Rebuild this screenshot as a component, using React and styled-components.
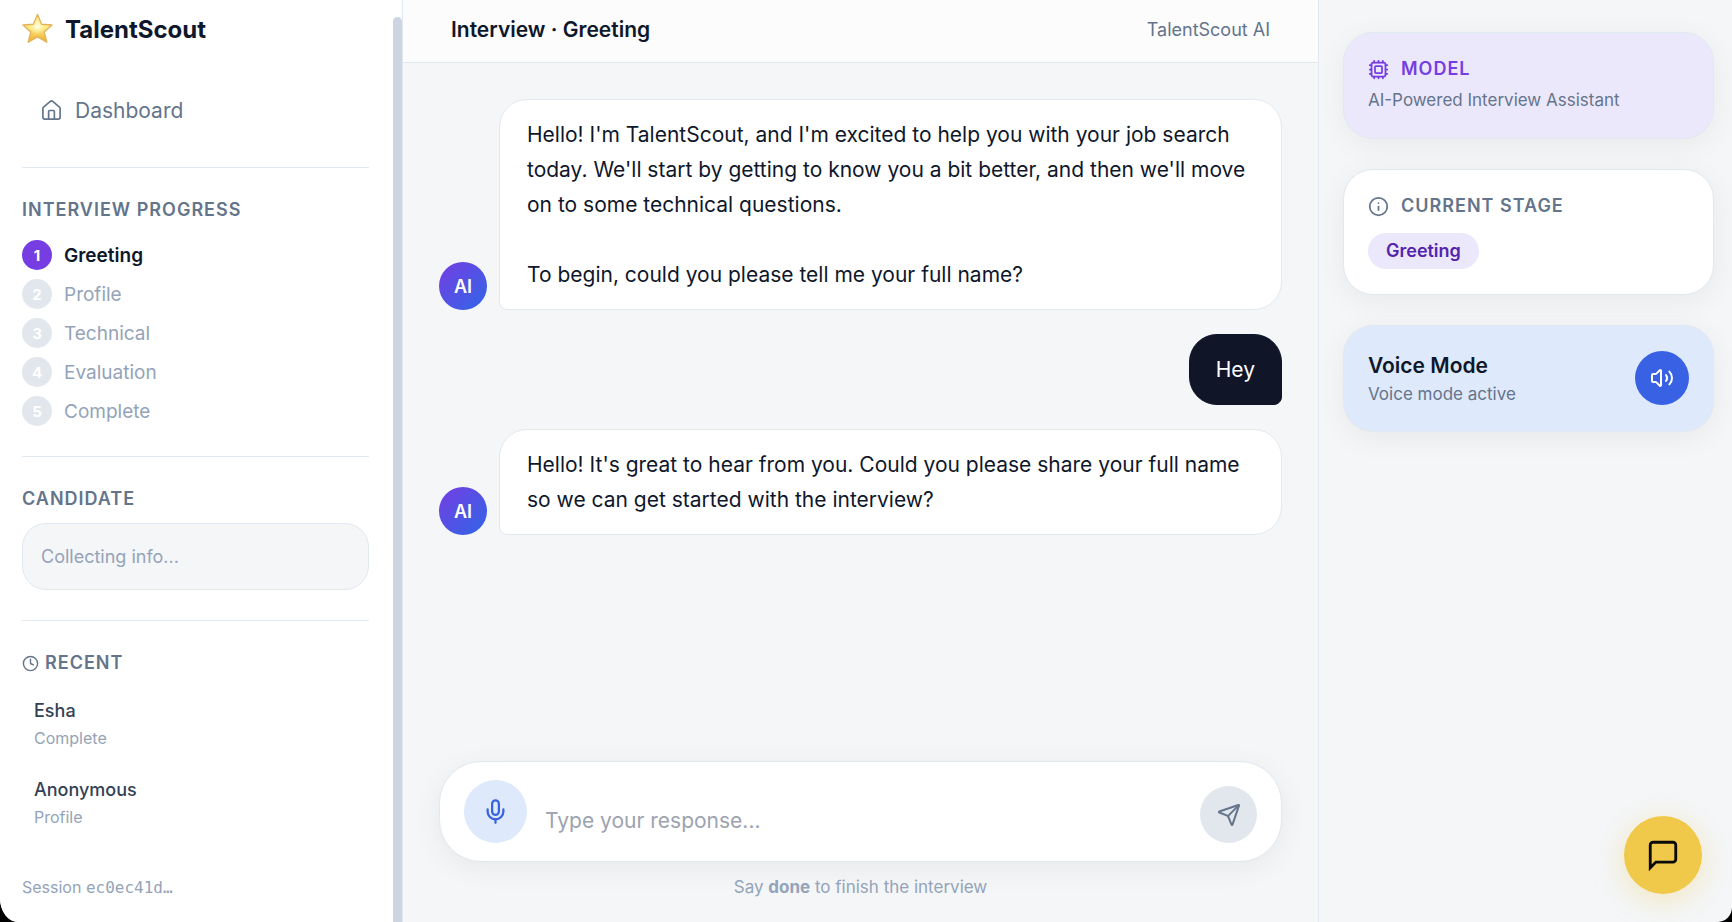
import React from "react";
import styled, { createGlobalStyle, css } from "styled-components";
import { House, Clock, Cpu, Info, Mic, Send, Volume2 } from "lucide-react";

const color = {
  ink: "#0f172a",
  slate: "#334155",
  muted: "#64748b",
  faint: "#94a3b8",
  line: "#e2e8f0",
  canvas: "#f4f6f8",
  violet: "#763de3",
  violetDark: "#5423ae",
  violetSoft: "#ece8fb",
  blue: "#3862e3",
  blueSoft: "#dee9fb",
  gold: "#f0c84a",
};

const GlobalStyle = createGlobalStyle`
  * { box-sizing: border-box; }
  body {
    margin: 0;
    background: #000;
    color: ${color.ink};
    font-family: Inter, "Liberation Sans", sans-serif;
    font-size: 18px;
  }
  button, textarea { font: inherit; color: inherit; border: 0; padding: 0; background: none; }
  button { cursor: pointer; }
  h1, h2, p, ol, ul { margin: 0; padding: 0; }
  ol, ul { list-style: none; }
`;

const Shell = styled.div`
  display: flex;
  min-height: 100vh;
  overflow: hidden;
  background: ${color.canvas};
  border-radius: 0 0 14px 18px / 0 0 15px 24px;
`;

const Sidebar = styled.aside`
  display: flex;
  flex: 0 0 403px;
  background: #fff;
  border-right: 1px solid ${color.line};
`;

const SidebarContent = styled.div`
  display: flex;
  flex-direction: column;
  flex: 1;
  padding: 10px 24px 22px 22px;
`;

const ScrollTrack = styled.div`
  display: flex;
  width: 9px;
  padding-top: 17px;
`;

const ScrollThumb = styled.div`
  flex: 1;
  background: #ccd5e1;
  border-radius: 5px 5px 0 0;
`;

const Brand = styled.div`
  display: flex;
  align-items: center;
  gap: 11px;
  height: 38px;
  font-size: 24px;
  font-weight: 700;
`;

const NavLink = styled.a`
  display: flex;
  align-items: center;
  gap: 12px;
  height: 48px;
  margin: 38px 0 33px;
  padding: 0 18px;
  color: ${color.muted};
  font-size: 21px;
  text-decoration: none;
`;

const Section = styled.section`
  padding: 29px 0 30px;
  border-top: 1px solid ${color.line};
`;

const Heading = styled.h2`
  display: flex;
  align-items: center;
  gap: ${(p) => p.$gap || 6}px;
  color: ${(p) => p.$color || color.muted};
  font-size: 18px;
  font-weight: 600;
  line-height: ${(p) => p.$line || 26}px;
  letter-spacing: 1px;
  text-transform: uppercase;
`;

const Steps = styled.ol`
  display: flex;
  flex-direction: column;
  gap: 9px;
  margin-top: 17px;
`;

const Step = styled.li`
  display: flex;
  align-items: center;
  gap: 12px;
  height: 30px;
  color: ${(p) => (p.$active ? color.ink : color.faint)};
  font-size: 19px;
  font-weight: ${(p) => (p.$active ? 600 : 400)};
`;

const StepNumber = styled.span`
  display: grid;
  place-items: center;
  width: 30px;
  height: 30px;
  border-radius: 50%;
  background: ${(p) => (p.$active ? color.violet : "#e2e7ee")};
  color: #fff;
  font-size: 15px;
  font-weight: 700;
`;

const CandidateBox = styled.p`
  margin-top: 11px;
  padding: 20px 18px;
  border: 1px solid ${color.line};
  border-radius: 24px;
  background: ${color.canvas};
  color: ${color.faint};
  line-height: 25px;
`;

const RecentList = styled.ul`
  display: flex;
  flex-direction: column;
  gap: 6px;
  margin-top: 11px;
`;

const RecentItem = styled.button`
  display: flex;
  flex-direction: column;
  gap: 2px;
  width: 100%;
  padding: 11px 12px 10px;
  text-align: left;
`;

const RecentName = styled.span`
  color: ${color.slate};
  font-weight: 500;
  line-height: 26px;
`;

const Caption = styled.span`
  display: block;
  color: ${(p) => p.$color || color.faint};
  font-size: ${(p) => (p.$large ? 17 : 16)}px;
  line-height: 24px;
`;

const Session = styled(Caption)`
  margin-top: auto;

  code { font-family: "DejaVu Sans Mono", monospace; font-size: 16px; }
`;

const Main = styled.main`
  display: flex;
  flex: 1;
  flex-direction: column;
  min-width: 0;
`;

const TopBar = styled.header`
  display: flex;
  align-items: center;
  justify-content: space-between;
  height: 63px;
  padding: 0 48px 4px;
  background: #fcfcfc;
  border-bottom: 1px solid ${color.line};
`;

const Title = styled.h1`
  font-size: 21px;
  font-weight: 600;
`;

const TopLabel = styled.span`
  color: ${color.muted};
`;

const Thread = styled.div`
  display: flex;
  flex: 1;
  flex-direction: column;
  gap: 24px;
  padding: 36px;
`;

const Message = styled.div`
  display: flex;
  align-items: flex-end;
  gap: 12px;
  justify-content: ${(p) => (p.$own ? "flex-end" : "flex-start")};
`;

const Avatar = styled.span`
  display: grid;
  flex: none;
  place-items: center;
  width: 48px;
  height: 48px;
  border-radius: 50%;
  background: linear-gradient(135deg, ${color.violet}, #2f66e6);
  color: #fff;
  font-weight: 600;
`;

const Bubble = styled.p`
  padding: 17px 27px;
  border: 1px solid ${color.line};
  border-radius: 28px 28px 28px 8px;
  background: #fff;
  font-size: 21px;
  line-height: 35px;
  white-space: pre-wrap;

  ${(p) =>
    p.$own &&
    css`
      padding: 17px 26px;
      border-color: #101628;
      border-radius: 28px 28px 8px 28px;
      background: #101628;
      color: #fff;
    `}
`;

const Footer = styled.footer`
  padding: 0 36px 23px;
`;

const Composer = styled.form`
  display: flex;
  align-items: flex-end;
  gap: 18px;
  padding: 18px 24px;
  border: 1px solid ${color.line};
  border-radius: 42px;
  background: #fff;
  box-shadow: 0 6px 30px rgba(0, 0, 0, 0.06);
`;

const RoundButton = styled.button`
  display: grid;
  flex: none;
  place-items: center;
  width: ${(p) => p.$size}px;
  height: ${(p) => p.$size}px;
  border-radius: 50%;
  background: ${(p) => p.$bg};
  color: ${(p) => p.$fg};
`;

const MessageInput = styled.textarea`
  flex: 1;
  min-width: 0;
  height: 37px;
  padding-bottom: 7px;
  font-size: 21px;
  line-height: 30px;
  resize: none;
  outline: none;
  overflow: hidden;

  &::placeholder { color: #9ca3af; opacity: 1; }
`;

const Hint = styled(Caption)`
  margin-top: 13px;
  text-align: center;
`;

const Panel = styled.aside`
  display: flex;
  flex: 0 0 414px;
  flex-direction: column;
  gap: 30px;
  padding: 32px 18px 32px 24px;
  border-left: 1px solid ${color.line};
`;

const Card = styled.section`
  padding: 24px 24px 25px;
  border: 1px solid ${color.line};
  border-radius: 30px;
  background: ${(p) => p.$bg || "#fff"};
  box-shadow: 0 6px 30px rgba(0, 0, 0, 0.06);
`;

const ModelText = styled(Caption)`
  margin-top: 7px;
  padding-bottom: 1px;
`;

const Pill = styled.span`
  display: inline-block;
  margin-top: 15px;
  padding: 0 18px;
  border-radius: 18px;
  background: ${color.violetSoft};
  color: ${color.violetDark};
  font-weight: 600;
  line-height: 36px;
  vertical-align: top;
`;

const VoiceCard = styled(Card)`
  display: flex;
  align-items: center;
  justify-content: space-between;
`;

const VoiceTitle = styled.h2`
  font-size: 21px;
  font-weight: 600;
  line-height: 32px;
`;

const ChatButton = styled(RoundButton)`
  position: fixed;
  right: 30px;
  bottom: 28px;
  box-shadow: 0 6px 30px rgba(240, 200, 74, 0.35);
`;

const StarLogo = () => (
  <svg width="32" height="32" viewBox="0 0 32 32" aria-hidden="true">
    <defs>
      <linearGradient id="starFill" x1="0" y1="0" x2="0" y2="1">
        <stop offset="0" stopColor="#fdf3a8" />
        <stop offset="0.5" stopColor="#fce97c" />
        <stop offset="1" stopColor="#eda92c" />
      </linearGradient>
      <radialGradient id="starGlow" cx="0.5" cy="0.42" r="0.34">
        <stop offset="0" stopColor="#fffef0" />
        <stop offset="1" stopColor="#fff6b0" stopOpacity="0" />
      </radialGradient>
    </defs>
    <path
      d="M15.5 1.5 19.6 11.2 30 12 22.2 18.9 24.8 29.2 15.5 23.8 6.2 29.2 8.8 18.9 1 12 11.4 11.2Z"
      fill="url(#starFill)"
      stroke="#e3b35c"
      strokeWidth="1.4"
      strokeLinejoin="round"
    />
    <path
      d="M15.5 3.5 19 12 28 12.7 21.4 18.6 23.6 27.4 15.5 22.6 7.4 27.4 9.6 18.6 3 12.7 12 12Z"
      fill="url(#starGlow)"
    />
  </svg>
);

const ChatIcon = () => (
  <svg width="34" height="34" viewBox="0 0 24 24" fill="none" stroke="currentColor" strokeWidth="2" aria-hidden="true">
    <path d="M21 15a2 2 0 0 1-2 2H7l-4 4V5a2 2 0 0 1 2-2h14a2 2 0 0 1 2 2z" />
  </svg>
);

const steps = ["Greeting", "Profile", "Technical", "Evaluation", "Complete"];

const recent = [
  { name: "Esha", stage: "Complete" },
  { name: "Anonymous", stage: "Profile" },
];

const messages = [
  {
    text:
      "Hello! I'm TalentScout, and I'm excited to help you with your job search today. We'll start by getting to know you a bit better, and then we'll move on to some technical questions.\n\nTo begin, could you please tell me your full name?",
  },
  { own: true, text: "Hey" },
  {
    text:
      "Hello! It's great to hear from you. Could you please share your full name so we can get started with the interview?",
  },
];

export default function App() {
  return (
    <>
      <GlobalStyle />
      <Shell>
        <Sidebar>
          <SidebarContent>
            <Brand>
              <StarLogo />
              TalentScout
            </Brand>
            <NavLink href="#dashboard">
              <House size={23} strokeWidth={1.75} />
              Dashboard
            </NavLink>
            <Section>
              <Heading>Interview Progress</Heading>
              <Steps>
                {steps.map((step, i) => (
                  <Step key={step} $active={i === 0}>
                    <StepNumber $active={i === 0}>{i + 1}</StepNumber>
                    {step}
                  </Step>
                ))}
              </Steps>
            </Section>
            <Section>
              <Heading>Candidate</Heading>
              <CandidateBox>Collecting info...</CandidateBox>
            </Section>
            <Section>
              <Heading>
                <Clock size={17} strokeWidth={2} />
                Recent
              </Heading>
              <RecentList>
                {recent.map((item) => (
                  <li key={item.name}>
                    <RecentItem type="button">
                      <RecentName>{item.name}</RecentName>
                      <Caption>{item.stage}</Caption>
                    </RecentItem>
                  </li>
                ))}
              </RecentList>
            </Section>
            <Session>
              Session <code>ec0ec41d…</code>
            </Session>
          </SidebarContent>
          <ScrollTrack>
            <ScrollThumb />
          </ScrollTrack>
        </Sidebar>

        <Main>
          <TopBar>
            <Title>Interview · Greeting</Title>
            <TopLabel>TalentScout AI</TopLabel>
          </TopBar>
          <Thread>
            {messages.map((m) => (
              <Message key={m.text} $own={m.own}>
                {!m.own && <Avatar>AI</Avatar>}
                <Bubble $own={m.own}>{m.text}</Bubble>
              </Message>
            ))}
          </Thread>
          <Footer>
            <Composer onSubmit={(e) => e.preventDefault()}>
              <RoundButton type="button" aria-label="Record" $size={63} $bg={color.blueSoft} $fg={color.blue}>
                <Mic size={27} />
              </RoundButton>
              <MessageInput rows={1} aria-label="Your response" placeholder="Type your response..." />
              <RoundButton type="submit" aria-label="Send" $size={57} $bg="#e2e7ee" $fg={color.muted}>
                <Send size={24} />
              </RoundButton>
            </Composer>
            <Hint $large>
              Say <strong>done</strong> to finish the interview
            </Hint>
          </Footer>
        </Main>

        <Panel>
          <Card $bg={color.violetSoft}>
            <Heading $color={color.violet} $gap={12} $line={24}>
              <Cpu size={21} />
              Model
            </Heading>
            <ModelText $large $color={color.muted}>
              AI-Powered Interview Assistant
            </ModelText>
          </Card>
          <Card>
            <Heading $gap={12} $line={24}>
              <Info size={21} />
              Current Stage
            </Heading>
            <Pill>Greeting</Pill>
          </Card>
          <VoiceCard $bg={color.blueSoft}>
            <div>
              <VoiceTitle>Voice Mode</VoiceTitle>
              <Caption $large $color={color.muted}>
                Voice mode active
              </Caption>
            </div>
            <RoundButton type="button" aria-label="Toggle voice mode" $size={54} $bg={color.blue} $fg="#fff">
              <Volume2 size={24} />
            </RoundButton>
          </VoiceCard>
        </Panel>

        <ChatButton type="button" aria-label="Open chat" $size={78} $bg={color.gold} $fg="#0a0a0a">
          <ChatIcon />
        </ChatButton>
      </Shell>
    </>
  );
}
